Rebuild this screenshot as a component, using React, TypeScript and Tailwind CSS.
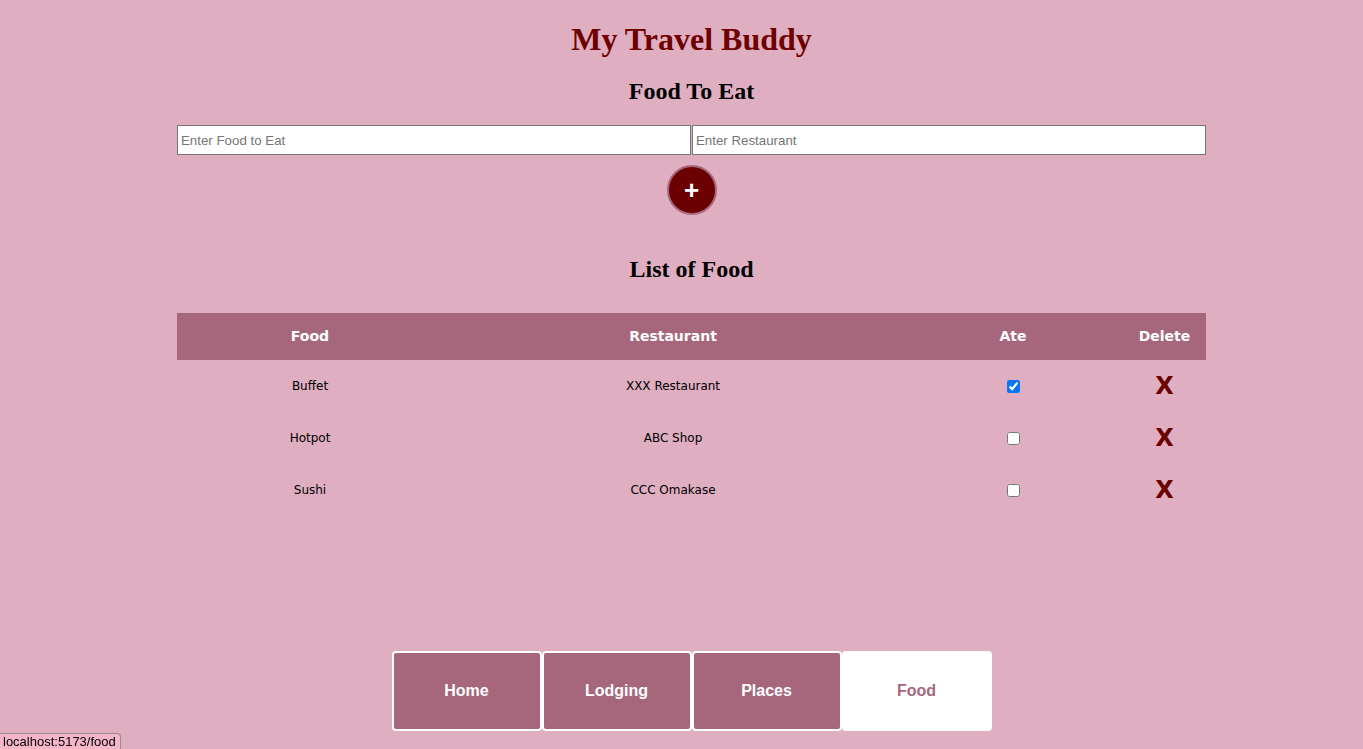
import { useState } from 'react';

type Food = { name: string; restaurant: string; ate: boolean };

const initial: Food[] = [
  { name: 'Buffet', restaurant: 'XXX Restaurant', ate: true },
  { name: 'Hotpot', restaurant: 'ABC Shop', ate: false },
  { name: 'Sushi', restaurant: 'CCC Omakase', ate: false },
];

const tabs = ['Home', 'Lodging', 'Places', 'Food'];

export default function App() {
  const [foods, setFoods] = useState<Food[]>(initial);
  const [food, setFood] = useState('');
  const [restaurant, setRestaurant] = useState('');

  const addFood = () => {
    if (!food.trim()) return;
    setFoods([...foods, { name: food, restaurant, ate: false }]);
    setFood('');
    setRestaurant('');
  };

  const toggle = (i: number) => {
    setFoods(foods.map((f, idx) => (idx === i ? { ...f, ate: !f.ate } : f)));
  };

  const remove = (i: number) => {
    setFoods(foods.filter((_, idx) => idx !== i));
  };

  return (
    <div className="h-screen bg-[#dfaec1] pl-[20px] flex flex-col items-center overflow-hidden">
      <h1 className="mt-[21px] text-[32px] leading-[37px] font-bold text-[#6e0000] font-['Liberation_Serif',serif]">
        My Travel Buddy
      </h1>
      <h2 className="mt-[19px] text-[24px] leading-[28px] font-bold text-black font-['Liberation_Serif',serif]">
        Food To Eat
      </h2>

      <div className="mt-[20px] flex w-[1029px]">
        <input
          value={food}
          onChange={(e) => setFood(e.target.value)}
          placeholder="Enter Food to Eat"
          className="w-[514px] h-[30px] bg-white border border-[#767676] px-[3px] text-[13.3px] font-['Liberation_Sans',sans-serif] text-black placeholder:text-[#757575] outline-none"
        />
        <input
          value={restaurant}
          onChange={(e) => setRestaurant(e.target.value)}
          placeholder="Enter Restaurant"
          className="ml-px w-[514px] h-[30px] bg-white border border-[#767676] px-[3px] text-[13.3px] font-['Liberation_Sans',sans-serif] text-black placeholder:text-[#757575] outline-none"
        />
      </div>

      <button
        onClick={addFood}
        className="mt-[10px] w-[50px] h-[50px] rounded-full bg-[#6b0000] border-2 border-[#a6677d] flex items-center justify-center text-white text-[26px] leading-none font-bold font-['Liberation_Sans',sans-serif]"
      >
        +
      </button>

      <h2 className="mt-[40px] text-[24px] leading-[28px] font-bold text-black font-['Liberation_Serif',serif]">
        List of Food
      </h2>

      <table className="mt-[30px] w-[1029px] table-fixed border-collapse font-['DejaVu_Sans',Verdana,sans-serif]">
        <thead>
          <tr className="bg-[#a6677d] h-[47px] text-white text-[14px] font-bold">
            <th className="w-[266px]">Food</th>
            <th className="w-[460px]">Restaurant</th>
            <th className="w-[220px]">Ate</th>
            <th className="w-[83px]">Delete</th>
          </tr>
        </thead>
        <tbody>
          {foods.map((f, i) => (
            <tr key={i} className="h-[52px] text-[12px] text-black text-center">
              <td>{f.name}</td>
              <td>{f.restaurant}</td>
              <td>
                <input
                  type="checkbox"
                  checked={f.ate}
                  onChange={() => toggle(i)}
                  className="w-[13px] h-[13px] align-middle accent-[#0a76f6]"
                />
              </td>
              <td>
                <button
                  onClick={() => remove(i)}
                  className="text-[24px] leading-none font-bold text-[#6b0000] font-['DejaVu_Sans',Verdana,sans-serif]"
                >
                  X
                </button>
              </td>
            </tr>
          ))}
        </tbody>
      </table>

      <nav className="mt-auto mb-[18px] flex">
        {tabs.map((t) => (
          <button
            key={t}
            className={`w-[150px] h-[80px] rounded-[4px] border-2 border-white text-[16px] font-bold font-['Liberation_Sans',sans-serif] ${
              t === 'Food' ? 'bg-white text-[#a6677d]' : 'bg-[#a6677d] text-white'
            }`}
          >
            {t}
          </button>
        ))}
      </nav>

      <div className="fixed left-0 bottom-0 w-[121px] h-[16px] pl-[3px] bg-[#f6b6ca] border border-[#9c8890] border-l-0 border-b-0 rounded-tr-[4px] text-[13px] leading-[16px] text-black font-['Liberation_Sans',sans-serif]">
        localhost:5173/food
      </div>
    </div>
  );
}
